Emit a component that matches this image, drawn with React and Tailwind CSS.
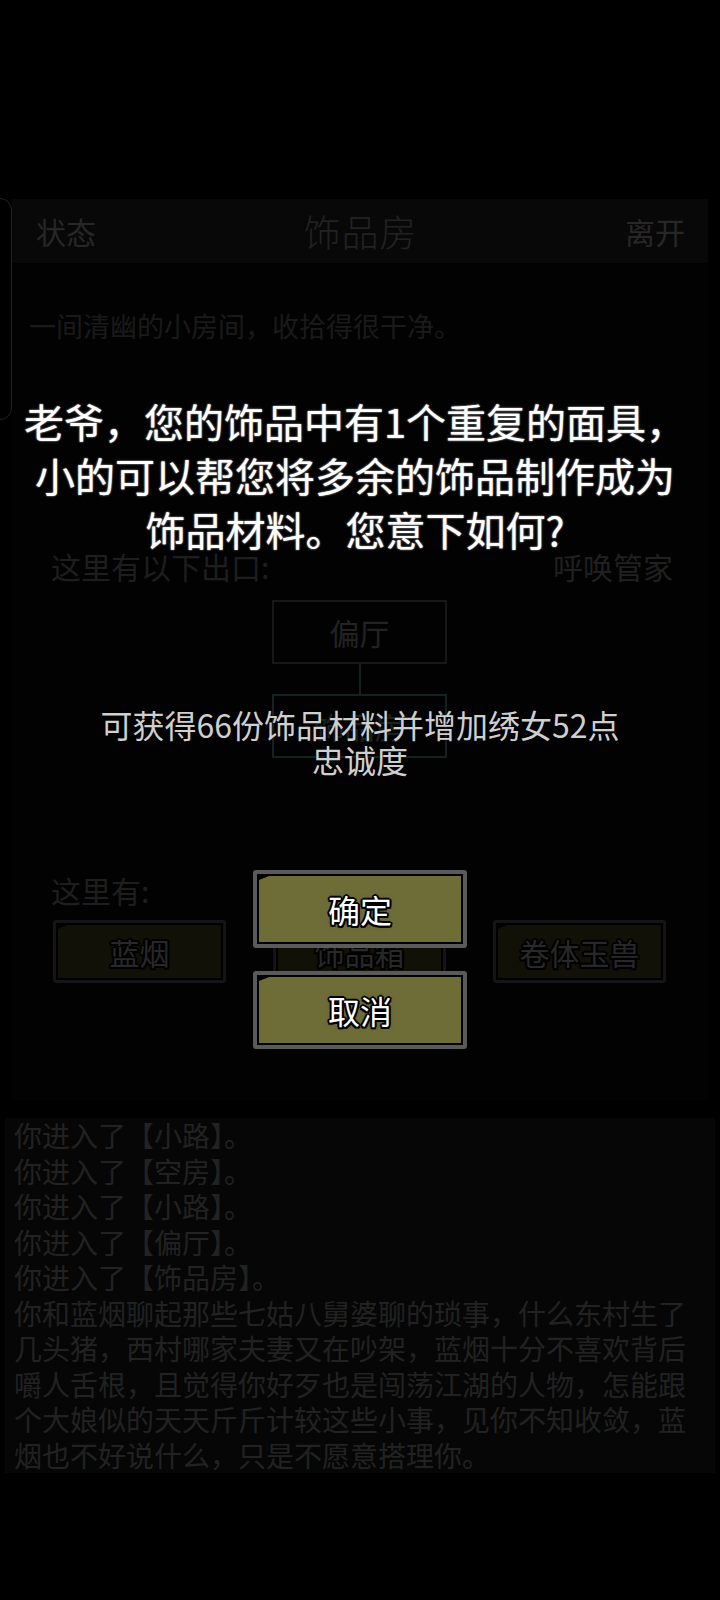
import React from "react";

const titleShadow =
  "[text-shadow:0_0_1px_#9a9a9a,0_0_1.5px_#8a8a8a,0_0_3px_#4a4a4a]";
const btnShadow =
  "[text-shadow:2px_0_0_#000,-2px_0_0_#000,0_2px_0_#000,0_-2px_0_#000,1.5px_1.5px_0_#000,-1.5px_1.5px_0_#000,1.5px_-1.5px_0_#000,-1.5px_-1.5px_0_#000,0_0_5px_#555]";
const dimBtnShadow =
  "[text-shadow:2px_0_0_#000,-2px_0_0_#000,0_2px_0_#000,0_-2px_0_#000,1.5px_1.5px_0_#000,-1.5px_1.5px_0_#000,1.5px_-1.5px_0_#000,-1.5px_-1.5px_0_#000]";

function DialogButton({ label }) {
  return (
    <div className="w-[214px] h-[78px] border-[4px] border-[#5a5a5a] rounded-[3px] bg-black p-[2px]">
      <div
        className={`h-full w-full bg-[#6e6c37] [clip-path:polygon(10px_0,100%_0,100%_100%,0_100%,0_4px)] flex items-center justify-center text-[32px] leading-none text-white ${btnShadow}`}
      >
        {label}
      </div>
    </div>
  );
}

function ItemButton({ label }) {
  return (
    <div className="w-[173px] h-[63px] border-[3px] border-[#151515] rounded-[3px] bg-black p-[2px]">
      <div
        className={`h-full w-full bg-[#111108] [clip-path:polygon(9px_0,100%_0,100%_100%,0_100%,0_4px)] flex items-center justify-center text-[30px] leading-none text-[#282828] ${dimBtnShadow}`}
      >
        {label}
      </div>
    </div>
  );
}

const logLines = [
  "你进入了【小路】。",
  "你进入了【空房】。",
  "你进入了【小路】。",
  "你进入了【偏厅】。",
  "你进入了【饰品房】。",
  "你和蓝烟聊起那些七姑八舅婆聊的琐事，什么东村生了",
  "几头猪，西村哪家夫妻又在吵架，蓝烟十分不喜欢背后",
  "嚼人舌根，且觉得你好歹也是闯荡江湖的人物，怎能跟",
  "个大娘似的天天斤斤计较这些小事，见你不知收敛，蓝",
  "烟也不好说什么，只是不愿意搭理你。",
];

export default function App() {
  return (
    <div className="relative w-[720px] h-[1600px] bg-black overflow-hidden font-['Noto_Sans_CJK_SC',sans-serif]">
      {/* side drawer handle */}
      <div className="absolute left-[-30px] top-[198px] w-[42px] h-[222px] rounded-[12px] border-[1.5px] border-[#222222]" />

      {/* underlying dimmed page */}
      <div className="flex flex-col pt-[199px]">
        <div className="mx-[12px] flex flex-col bg-[#020202]">
          {/* header */}
          <div className="h-[64px] flex items-center justify-between pl-[24px] pr-[23px] bg-[#080808]">
            <span className="text-[30px] leading-none text-[#272727]">状态</span>
            <span className="text-[37px] leading-none text-[#222222] font-light tracking-[1px]">饰品房</span>
            <span className="text-[30px] leading-none text-[#272727]">离开</span>
          </div>

          <div className="mt-[45px] pl-[17px] text-[27px] leading-[36px] text-[#1a1a1a]">
            一间清幽的小房间，收拾得很干净。
          </div>

          <div className="ml-[34px] w-[627px] flex flex-col mt-[202px]">
            <div className="flex items-center justify-between pl-[5px] h-[40px]">
              <span className="text-[30px] leading-none text-[#1e1e1e]">这里有以下出口:</span>
              <span className="text-[30px] leading-none text-[#202020]">呼唤管家</span>
            </div>

            <div className="flex flex-col items-center mt-[14px]">
              <div className="w-[175px] h-[64px] border-[2px] border-[#171717] flex items-center justify-center text-[30px] leading-none text-[#232323]">
                偏厅
              </div>
              <div className="w-[2px] h-[30px] bg-[#162020]" />
              <div className="w-[175px] h-[64px] border-[2px] border-[#162121] flex items-center justify-center text-[30px] leading-none text-[#1a2424]">
                饰品房
              </div>
            </div>

            <div className="mt-[112px] pl-[5px] h-[40px] flex items-center text-[30px] leading-none text-[#1e1e1e]">
              这里有:
            </div>

            <div className="mt-[10px] px-[7px] flex justify-between">
              <ItemButton label="蓝烟" />
              <ItemButton label="饰品箱" />
              <ItemButton label="卷体玉兽" />
            </div>
          </div>
          <div className="h-[117px]" />
        </div>

        {/* log */}
        <div className="mt-[18px] mx-[5px] bg-[#060606] px-[9px] flex flex-col">
          {logLines.map((l, i) => (
            <div key={i} className="text-[28px] leading-[35.5px] text-[#222222] whitespace-nowrap">
              {l}
            </div>
          ))}
        </div>
      </div>

      {/* dialog overlay */}
      <div className="absolute inset-0 flex flex-col pt-[394px]">
        <div
          className={`ml-[20px] w-[670px] text-center text-[40px] leading-[54px] text-white ${titleShadow}`}
        >
          老爷，您的饰品中有1个重复的面具，小的可以帮您将多余的饰品制作成为饰品材料。您意下如何?
        </div>
        <div className="self-center mt-[151px] w-[530px] text-center text-[32px] leading-[35px] text-[#cfcfcf] [text-shadow:0_0_2px_#000]">
          可获得66份饰品材料并增加绣女52点忠诚度
        </div>
        <div className="self-center mt-[93px] flex flex-col gap-[23px]">
          <DialogButton label="确定" />
          <DialogButton label="取消" />
        </div>
      </div>
    </div>
  );
}
